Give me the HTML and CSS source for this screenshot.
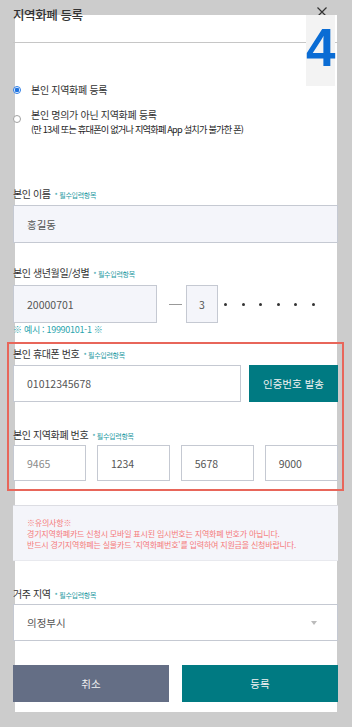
FILE: index.html
```html
<!DOCTYPE html>
<html lang="ko">
<head>
<meta charset="utf-8">
<title>지역화폐 등록</title>
<link rel="stylesheet" href="styles.css">
</head>
<body>
<div class="sheet">
  <div class="badge">4</div>
  <div class="content">
    <div class="head">
      <h1 class="title">지역화폐 등록</h1>
      <svg class="close" width="12" height="10" viewBox="0 0 12 10"><path d="M1.5 0.5 L10.5 9.5 M10.5 0.5 L1.5 9.5" stroke="#333" stroke-width="1.2" fill="none"/></svg>
    </div>

    <div class="radios">
      <div class="radio"><span class="dot on"></span><span>본인 지역화폐 등록</span></div>
      <div class="radio two"><span class="dot"></span><span>본인 명의가 아닌 지역화폐 등록<br><span class="sub">(만 13세 또는 휴대폰이 없거나 지역화폐 App 설치가 불가한 폰)</span></span></div>
    </div>

    <div class="field name">
      <div class="label">본인 이름 <span class="req">* 필수입력항목</span></div>
      <div class="input filled">홍길동</div>
    </div>

    <div class="field birth">
      <div class="label">본인 생년월일/성별 <span class="req">* 필수입력항목</span></div>
      <div class="birth-row">
        <div class="input filled date">20000701</div>
        <span class="dash"></span>
        <div class="input filled gender">3</div>
        <div class="dots"><i></i><i></i><i></i><i></i><i></i><i></i></div>
      </div>
      <div class="example">※ 예시 : 19990101-1 ※</div>
    </div>

    <div class="highlight">
      <div class="label">본인 휴대폰 번호 <span class="req">* 필수입력항목</span></div>
      <div class="phone-row">
        <div class="input plain phone">01012345678</div>
        <div class="btn teal send">인증번호 발송</div>
      </div>
      <div class="label card-label">본인 지역화폐 번호 <span class="req">* 필수입력항목</span></div>
      <div class="cards">
        <div class="input plain card light">9465</div>
        <div class="input plain card">1234</div>
        <div class="input plain card">5678</div>
        <div class="input plain card">9000</div>
      </div>
    </div>

    <div class="notice">
      <p>※유의사항※</p>
      <p>경기지역화폐카드 신청시 모바일 표시된 임시번호는 지역화폐 번호가 아닙니다.</p>
      <p>반드시 경기지역화폐는 실물카드 '지역화폐번호'를 입력하여 지원금을 신청바랍니다.</p>
    </div>

    <div class="field region">
      <div class="label">거주 지역 <span class="req">* 필수입력항목</span></div>
      <div class="input plain select"><span>의정부시</span><span class="arrow"></span></div>
    </div>

    <div class="actions">
      <div class="btn cancel">취소</div>
      <div class="btn teal">등록</div>
    </div>
  </div>
</div>
</body>
</html>
```

FILE: styles.css
```css
* { box-sizing: border-box; margin: 0; padding: 0; }
html, body { width: 352px; height: 727px; overflow: hidden; }
body {
  background: #cccccc;
  font-family: "Noto Sans CJK KR", "Noto Sans", sans-serif;
  color: #333;
}
.sheet {
  position: relative;
  display: flow-root;
  margin: 15px 15px 0;
  width: 322px;
  height: 697px;
  background: #fff;
}
.content { margin: 0 -1px 0 -2px; }

.badge {
  position: absolute;
  top: 0;
  right: 2px;
  width: 29px;
  height: 71px;
  background: #f3f3f3;
  color: #0a6cd4;
  font-family: "Liberation Sans", Arial, sans-serif;
  font-weight: bold;
  font-size: 53px;
  line-height: 1;
  padding-top: 6px;
  text-align: center;
  z-index: 2;
}

.head {
  display: flex;
  justify-content: space-between;
  align-items: flex-start;
  margin-top: -8px;
  height: 36px;
  border-bottom: 1px solid #c6c6c6;
}
.title {
  font-size: 12.5px;
  font-weight: 500;
  line-height: 16px;
  letter-spacing: -0.4px;
  color: #333;
}
.close { margin-right: 10px; }

.radios {
  margin-top: 40px;
  display: flex;
  flex-direction: column;
  gap: 11px;
}
.radio {
  display: flex;
  align-items: flex-start;
  gap: 10px;
  font-size: 10px;
  line-height: 14px;
  color: #333;
  letter-spacing: -0.3px;
}
.radio .sub { font-size: 9.2px; letter-spacing: -0.8px; color: #222; }
.dot {
  flex: none;
  width: 8px;
  height: 8px;
  margin-top: 3px;
  border-radius: 50%;
  border: 1px solid #a0a0a0;
  background: #fff;
}
.dot.on {
  border-color: #2a7ce6;
  background: radial-gradient(circle, #1f73e0 0 2px, #fff 2.6px);
}
.two .dot { margin-top: 7px; }

.label {
  display: flex;
  align-items: baseline;
  gap: 4px;
  font-size: 10px;
  line-height: 14px;
  color: #333;
  letter-spacing: -0.4px;
}
.req { font-size: 7px; color: #1f9aa3; letter-spacing: -0.3px; }

.input {
  display: flex;
  align-items: center;
  height: 38px;
  padding-left: 13px;
  border: 1px solid #c5c9d2;
  font-size: 10.5px;
  color: #555;
}
.filled { background: #f4f5fa; }
.plain { background: #fff; }

.field.name { margin-top: 51px; }
.field.name .input { margin-top: 3px; }

.field.birth { margin-top: 23px; }
.birth-row {
  display: flex;
  align-items: center;
  margin-top: 4px;
}
.date { width: 144px; }
.dash {
  width: 13px;
  height: 1px;
  background: #999;
  margin: 0 4px 0 12px;
}
.gender { width: 32px; padding: 0; justify-content: center; }
.dots { display: flex; gap: 14.5px; margin-left: 6px; }
.dots i { width: 3px; height: 3px; border-radius: 50%; background: #333; }
.example {
  margin-top: 1px;
  font-size: 9px;
  line-height: 12px;
  color: #2aa4ad;
  letter-spacing: -0.3px;
}

.highlight {
  margin: 6px -6px 0;
  border: 2px solid #e8665a;
  padding: 3px 4px 8px;
}
.phone-row {
  display: flex;
  gap: 8px;
  margin-top: 3px;
}
.phone { flex: 1; height: 37px; }
.btn {
  display: flex;
  align-items: center;
  justify-content: center;
  height: 37px;
  color: #f2f2f2;
  font-size: 10.5px;
}
.teal { background: #007a82; }
.send { width: 89px; }
.card-label { margin-top: 26px; }
.cards {
  display: grid;
  grid-template-columns: repeat(4, 1fr);
  gap: 10.5px;
  margin-top: 2px;
}
.card { height: 36px; }
.card.light { color: #8a8a8a; }

.notice {
  margin-top: 14px;
  background: #f4f5fa;
  border-top: 1px solid #dcdde3;
  border-bottom: 1px solid #e8e9ee;
  padding: 11px 14px 10px;
  font-size: 8px;
  line-height: 11px;
  color: #f47a7a;
  letter-spacing: -0.2px;
}

.field.region { margin-top: 26px; }
.select {
  margin-top: 2px;
  height: 37px;
  justify-content: space-between;
  padding-right: 20px;
}
.arrow {
  width: 0;
  height: 0;
  border-left: 3.5px solid transparent;
  border-right: 3.5px solid transparent;
  border-top: 4px solid #bbb;
}

.actions {
  display: flex;
  gap: 13px;
  margin-top: 24px;
}
.actions .btn { flex: 1; }
.cancel { background: #646e85; }
```
